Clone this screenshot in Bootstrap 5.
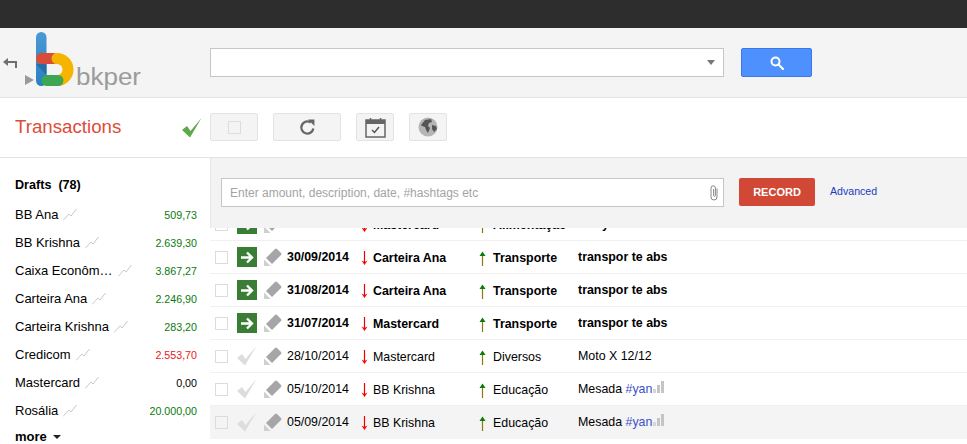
<!DOCTYPE html>
<html lang="pt"><head><meta charset="utf-8"><title>bkper</title>
<link rel="stylesheet" href="https://cdn.jsdelivr.net/npm/bootstrap@5.3.0/dist/css/bootstrap.min.css">
<style>
html,body{height:444px;overflow:hidden}
body{font-family:"Liberation Sans",Arial,sans-serif;font-size:12.4px;color:#000;background:#fff}
.topbar{height:28px;background:#2d2d2d}
.headbar{height:70px;background:#f4f4f4;border-bottom:1px solid #e3e3e3}
.back-ic{width:14px;height:10px;margin:0 3px 0 3px;flex:none}
.logo-box{width:124px;height:69px;margin-left:5px;margin-right:61px;flex:none}
.logo-txt{font-family:"Liberation Sans",sans-serif;font-size:23px;fill:#9b9b9b}
.search-in{width:514px;height:29px;background:#fff;border:1px solid #c6c6c6}
.caret-dn{width:0;height:0;border:4px solid transparent;border-top:5px solid #777;border-bottom:0;margin-right:4px}
.btn-search{width:71px;height:29px;background:#4d90fe;border:1px solid #3b78e7;border-radius:2px;margin-left:17px}
.toolbar{height:60px;border-bottom:1px solid #e3e3e3}
.page-title{width:167px;margin-left:15px;font-size:18.7px;color:#dd4b39;line-height:1;margin-top:-1px}
.tbtn{height:28px;background:#f4f4f4;border:1px solid #e3e3e3;border-radius:2px;margin-top:-1px}
.t1{width:48px;margin-left:8px}.t2{width:68px;margin-left:15px}.t3{width:38px;margin-left:15px}.t4{width:38px;margin-left:15px}
.mini-check{width:13px;height:13px;border:1px solid #ddd}
.body-area{height:286px}
.side{width:210px;flex:none;padding:0 0 0 15px}
.side-head{font-weight:700;font-size:12.6px;padding-top:20px;height:43px;line-height:15px}
.acct{height:28px;width:182px;font-size:13px;line-height:28px;white-space:nowrap}
.amt{margin-left:auto;font-size:10.7px}
.pos{color:#0b7a0b}.neg{color:#f01414}.zer{color:#000}
.spark{width:14px;height:12px;margin-left:5px;flex:none}
.more-l{font-weight:700;font-size:13px;line-height:15px;margin-top:4px}
.more-c{display:inline-block;width:0;height:0;border:4px solid transparent;border-top:4px solid #222;border-bottom:0;margin:0 0 2px 6px}
.main-col{min-width:0;overflow:hidden;flex:1}
.form-bar{height:70px;background:#f3f3f3;border-left:1px solid #e8e8e8;position:relative;z-index:2;padding:20px 0 0 10px}
.in-box{width:503px;height:29px;background:#fff;border:1px solid #c6c6c6;padding:0 4px 0 8px;color:#a3a3a3;font-size:12px}
.btn-rec{width:76px;height:28px;background:#d14836;border-radius:2px;color:#fff;font-weight:700;font-size:11px;margin-left:15px}
.adv{color:#1a3bc4;font-size:10.6px;margin-left:15px;margin-top:6px;text-decoration:none}
.rows{margin-top:-20px}
.trow{height:33px;border-bottom:1px solid #f0f0f0;padding-left:5px;white-space:nowrap}
.trow.b{font-weight:700}
.trow.hov{background:#f4f4f4;border-bottom-color:#f4f4f4}
.cb{width:13px;height:13px;border:1px solid #dcdcdc;background:transparent;flex:none}
.stat{width:20px;height:20px;margin-left:9px;flex:none;display:flex;align-items:center;justify-content:center}
.stat.go{background:#3a7d34}
.pen{width:18px;height:18px;margin-left:7px;flex:none}
.dt{width:64px;margin-left:5px;flex:none}
.arr{width:9px;height:15px;flex:none;margin-left:9px;margin-top:2px}
.c1{width:105px;margin-left:4px;flex:none;margin-top:2px}
.arr2{width:9px;height:15px;flex:none;margin-top:2px}
.c2{width:85px;margin-left:6px;flex:none;margin-top:2px}
.desc{flex:none}
.tag{color:#3c50c8}
.bars{width:11px;height:12px;margin-left:1px;vertical-align:0}
</style></head><body>
<div class="topbar"></div>
<div class="headbar d-flex align-items-center">
 <svg class="back-ic" viewBox="0 0 14 10"><path d="M0 4 5 0v3h9v7h-2V5H5v3z" fill="#6f6f6f"/></svg>
 <div class="logo-box">
 <svg width="124" height="69" viewBox="0 0 124 69">
  <defs><linearGradient id="bl" x1="0" y1="0" x2="0" y2="1"><stop offset="0" stop-color="#4a9bd4"/><stop offset="1" stop-color="#2a7fc0"/></linearGradient></defs>
  <path d="M0 47 9 52 0 57z" fill="#9a9a9a"/>
  <path d="M21 52.500h12" stroke="#3da652" stroke-width="11"/>
  <rect x="11" y="4" width="10.500" height="54" rx="5.200" fill="url(#bl)"/>
  <path d="M21.500 47V36H11z" fill="#266ea6"/>
  <path d="M16.500 30.500h12" stroke="#d94c3a" stroke-width="11" stroke-linecap="round"/>
  <path d="M32 30.500a11 11 0 0 1 0 22" fill="none" stroke="#f5b400" stroke-width="11" stroke-linecap="round"/>
  <path d="M22 52.500h11" stroke="#3da652" stroke-width="11" stroke-linecap="round"/>
  <text x="51" y="57" class="logo-txt" textLength="65" lengthAdjust="spacingAndGlyphs">bkper</text>
 </svg>
 </div>
 <div class="search-in d-flex align-items-center justify-content-end"><span class="caret-dn"></span><span class="me-1"></span></div>
 <button type="button" class="btn-search d-flex align-items-center justify-content-center p-0" aria-label="Search"><svg width="14" height="14" viewBox="0 0 14 14"><circle cx="5.500" cy="5.500" r="4" fill="none" stroke="#fff" stroke-width="2"/><path d="M8.500 8.500 13 13" stroke="#fff" stroke-width="2.200" stroke-linecap="round"/></svg></button>
</div>
<div class="toolbar d-flex align-items-center">
 <div class="page-title">Transactions</div>
 <svg width="20" height="20" viewBox="0 0 20 20" class="flex-none"><path d="M0 12 5 8l3.500 5L19.500 0 8 19.500z" fill="#5fa84b"/></svg>
 <div class="tbtn t1 d-flex align-items-center justify-content-center"><span class="mini-check"></span></div>
 <div class="tbtn t2 d-flex align-items-center justify-content-center"><svg width="17" height="17" viewBox="0 0 16 16"><path d="M13.500 9A5.700 5.700 0 1 1 11 3.200" fill="none" stroke="#666" stroke-width="2.200"/><path d="M8.500 0.500h6v6z" fill="#666"/></svg></div>
 <div class="tbtn t3 d-flex align-items-center justify-content-center"><svg width="21" height="21" viewBox="0 0 21 21"><rect x="1" y="3" width="19" height="17" fill="none" stroke="#666" stroke-width="1.500"/><rect x="1" y="3" width="19" height="4" fill="#666"/><path d="M5.500 1v4M15.500 1v4" stroke="#666" stroke-width="1.500"/><path d="M7 13l2.500 2.500L14 10" fill="none" stroke="#555" stroke-width="1.500"/></svg></div>
 <div class="tbtn t4 d-flex align-items-center justify-content-center"><svg width="20" height="20" viewBox="0 0 20 20"><circle cx="10" cy="10" r="9.500" fill="#b5b5b5"/><path d="M3 8l4-5 6-1 1 3-3 1-1 3 2 2-2 5-2-3-1-3-3-1zM14 8l4 1 1 3-3 3-2-3z" fill="#555"/></svg></div>
</div>
<div class="body-area d-flex">
 <div class="side">
  <div class="side-head">Drafts&nbsp; (78)</div>
  <div class="acct d-flex align-items-center"><span>BB Ana</span><svg class="spark" viewBox="0 0 14 12"><path d="M0 11.500 6 5l2 2 5.500-7" fill="none" stroke="#c8c8c8"/></svg><span class="amt pos">509,73</span></div>
  <div class="acct d-flex align-items-center"><span>BB Krishna</span><svg class="spark" viewBox="0 0 14 12"><path d="M0 11.500 6 5l2 2 5.500-7" fill="none" stroke="#c8c8c8"/></svg><span class="amt pos">2.639,30</span></div>
  <div class="acct d-flex align-items-center"><span>Caixa Econôm…</span><svg class="spark" viewBox="0 0 14 12"><path d="M0 11.500 6 5l2 2 5.500-7" fill="none" stroke="#c8c8c8"/></svg><span class="amt pos">3.867,27</span></div>
  <div class="acct d-flex align-items-center"><span>Carteira Ana</span><svg class="spark" viewBox="0 0 14 12"><path d="M0 11.500 6 5l2 2 5.500-7" fill="none" stroke="#c8c8c8"/></svg><span class="amt pos">2.246,90</span></div>
  <div class="acct d-flex align-items-center"><span>Carteira Krishna</span><svg class="spark" viewBox="0 0 14 12"><path d="M0 11.500 6 5l2 2 5.500-7" fill="none" stroke="#c8c8c8"/></svg><span class="amt pos">283,20</span></div>
  <div class="acct d-flex align-items-center"><span>Credicom</span><svg class="spark" viewBox="0 0 14 12"><path d="M0 11.500 6 5l2 2 5.500-7" fill="none" stroke="#c8c8c8"/></svg><span class="amt neg">2.553,70</span></div>
  <div class="acct d-flex align-items-center"><span>Mastercard</span><svg class="spark" viewBox="0 0 14 12"><path d="M0 11.500 6 5l2 2 5.500-7" fill="none" stroke="#c8c8c8"/></svg><span class="amt zer">0,00</span></div>
  <div class="acct d-flex align-items-center"><span>Rosália</span><svg class="spark" viewBox="0 0 14 12"><path d="M0 11.500 6 5l2 2 5.500-7" fill="none" stroke="#c8c8c8"/></svg><span class="amt pos">20.000,00</span></div>
  <div class="more-l">more<span class="more-c"></span></div>
 </div>
 <div class="main-col">
  <div class="form-bar d-flex">
   <div class="in-box d-flex align-items-center justify-content-between"><span>Enter amount, description, date, #hashtags etc</span><svg width="10" height="17" viewBox="0 0 10 16"><path d="M8 4v8.500a3 3 0 0 1-6 0V3.500a2.200 2.200 0 0 1 4.400 0V11a.9.9 0 0 1-1.800 0V4.500" fill="none" stroke="#888" stroke-width="1"/></svg></div>
   <button type="button" class="btn-rec border-0 p-0">RECORD</button>
   <a class="adv" href="#">Advanced</a>
  </div>
  <div class="rows" id="rows"></div>
 </div>
</div>
<script>
var A='<svg viewBox="0 0 9 15" class="arr"><path d="M4.500 0v12" stroke="#e00" stroke-width="1.200"/><path d="M1.500 9.500 4.500 14 7.500 9.500 4.500 11z" fill="#f00"/></svg>';
var U='<svg viewBox="0 0 9 15" class="arr2"><path d="M4.500 3v12" stroke="#8a7a10" stroke-width="1.200"/><path d="M1.500 5 4.500 0.500 7.500 5z" fill="#0a7a0a"/></svg>';
var P='<svg viewBox="0 0 18 18" class="pen"><path d="M2 10 11 1q1-1 2 0l4 4q1 1 0 2L8 16z" fill="#a6a6a6"/><path d="M0 11.500 6.500 18H0z" fill="#cfcfcf"/></svg>';
var G='<span class="stat go"><svg width="14" height="13" viewBox="0 0 14 13"><path d="M1 6.500h10M7 1.500l5 5-5 5" fill="none" stroke="#fff" stroke-width="2.400"/></svg></span>';
var C='<span class="stat"><svg width="20" height="20" viewBox="0 0 20 20"><path d="M0 12 5 8l3.500 5L19.500 0 8 19.500z" fill="#ddd"/></svg></span>';
var B='<svg viewBox="0 0 11 12" class="bars"><rect x="0" y="8" width="3" height="4" fill="#d6d6d6"/><rect x="4" y="4" width="3" height="8" fill="#c4c4c4"/><rect x="8" y="0" width="3" height="12" fill="#c4c4c4"/></svg>';
var d=[
["b","","Mastercard","Alimentação","xxx y"],
["b","30/09/2014","Carteira Ana","Transporte","transpor te abs"],
["b","31/08/2014","Carteira Ana","Transporte","transpor te abs"],
["b","31/07/2014","Mastercard","Transporte","transpor te abs"],
["","28/10/2014","Mastercard","Diversos","Moto X 12/12"],
["","05/10/2014","BB Krishna","Educação",'Mesada <span class="tag">#yan</span>'+B],
["hov","05/09/2014","BB Krishna","Educação",'Mesada <span class="tag">#yan</span>'+B]];
document.getElementById('rows').innerHTML=d.map(function(r){return '<div class="trow d-flex align-items-center '+r[0]+'"><span class="cb"></span>'+(r[0]=="b"?G:C)+P+'<span class="dt">'+r[1]+'</span>'+A+'<span class="c1">'+r[2]+'</span>'+U+'<span class="c2">'+r[3]+'</span><span class="desc">'+r[4]+'</span></div>'}).join('');
</script>
<script src="https://cdn.jsdelivr.net/npm/bootstrap@5.3.0/dist/js/bootstrap.bundle.min.js"></script>
</body></html>
